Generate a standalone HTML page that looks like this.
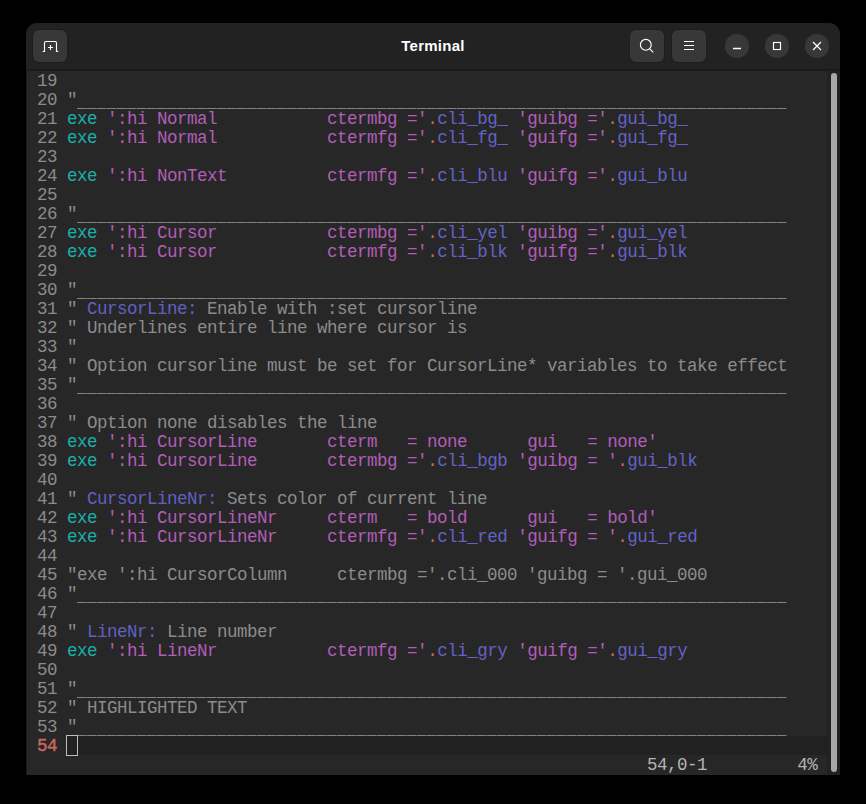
<!DOCTYPE html>
<html><head><meta charset="utf-8"><style>
html,body{margin:0;padding:0;background:#000;}
body{width:866px;height:804px;overflow:hidden;position:relative;}
.win{position:absolute;left:26px;top:23px;width:814px;height:752px;background:#222222;border-radius:11px 11px 0 0;overflow:hidden;}
.hdrline{position:absolute;left:0;top:46px;width:814px;height:2px;background:linear-gradient(#191919 0 1px,#1c1c1c 1px 2px);}
.content{position:absolute;left:1px;top:48px;width:800px;height:704px;background:#272727;}
.lborder{position:absolute;left:0;top:48px;width:1px;height:705px;background:#1c1c1c;}
.trough{position:absolute;left:801px;top:48px;width:13px;height:704px;background:#222222;}
.thumb{position:absolute;left:805px;top:50px;width:6px;height:699px;background:#a8a8a8;border-radius:3px;}
.l{position:absolute;left:1px;height:19px;line-height:19px;white-space:pre;font-family:"Liberation Mono",monospace;font-size:17.5px;letter-spacing:-0.5px;color:#cccccc;}
.ln{color:#8b8b8b;}
.lnr{color:#c96660;-webkit-text-stroke:0.45px #c96660;}
.k{color:#19b0ac;}
.s{color:#b25db8;}
.o{color:#c8665a;}
.v{color:#6262c6;}
.c{color:#8b8b8b;}
.t{color:#6060c2;}
.u{color:#8b8b8b;}
.uline{position:absolute;left:51px;width:710px;height:1px;background:repeating-linear-gradient(to right,#828282 0 9px,#5a5a5a 9px 10px);}
.curline{position:absolute;left:52px;top:713px;width:749px;height:19px;background:#212121;}
.cursor{position:absolute;left:40px;top:712px;width:10px;height:19px;border:1px solid #bdbdbd;background:#212121;}
.status{position:absolute;left:1px;top:733px;height:19px;line-height:19px;white-space:pre;font-family:"Liberation Mono",monospace;font-size:17.5px;letter-spacing:-0.5px;color:#b4b4b4;}
.btn{position:absolute;top:7px;width:34px;height:32px;border-radius:6px;background:#383838;box-shadow:0 0 0 1px rgba(0,0,0,0.12);}
.circ{position:absolute;top:11.3px;width:23.4px;height:23.4px;border-radius:50%;margin-left:0.3px;background:#383838;}
.title{position:absolute;left:0;width:814px;top:13px;text-align:center;font-family:"Liberation Sans",sans-serif;font-weight:bold;font-size:15px;letter-spacing:0.25px;color:#ffffff;line-height:20px;}
svg{position:absolute;left:0;top:0;}
</style></head>
<body><div class="win">

<div class="btn" style="left:7px"></div>
<div class="btn" style="left:604px"></div>
<div class="btn" style="left:646px"></div>
<div class="circ" style="left:699px"></div>
<div class="circ" style="left:739px"></div>
<div class="circ" style="left:779px"></div>
<div class="title">Terminal</div>
<svg width="814" height="46" viewBox="0 0 814 46" fill="none" stroke="#ffffff" stroke-width="1.15">
 <path d="M16.6 28.5 H18.5 V19.9 Q18.5 18.5 19.9 18.5 H29.1 Q30.5 18.5 30.5 19.9 V28.5 H32.3" />
 <path d="M24.5 22 V27 M22 24.5 H27" />
 <circle cx="619.8" cy="21.8" r="5.4" />
 <path d="M623.8 25.8 L627.3 29.3" />
 <path d="M658 18.5 H668 M658 22.5 H668 M658 26.5 H668" />
 <path d="M707 25.5 H715" stroke-width="1.3"/>
 <rect x="747.5" y="19.5" width="7" height="7" />
 <path d="M787 19 L795 27 M795 19 L787 27" />
</svg>

<div class="hdrline"></div>
<div class="content"></div>
<div class="lborder"></div>
<div class="trough"></div>
<div class="thumb"></div>
<div class="curline"></div>
<div class="uline" style="top:85px"></div><div class="uline" style="top:199px"></div><div class="uline" style="top:275px"></div><div class="uline" style="top:370px"></div><div class="uline" style="top:579px"></div><div class="uline" style="top:674px"></div><div class="uline" style="top:712px"></div>
<div class="l" style="top:49px"><span class="ln"> 19 </span></div>
<div class="l" style="top:68px"><span class="ln"> 20 </span><span class="c">&quot;</span><span class="u">                                                                       </span></div>
<div class="l" style="top:87px"><span class="ln"> 21 </span><span class="k">exe</span> <span class="s">&#x27;:hi Normal           </span><span class="s">ctermbg =&#x27;</span><span class="o">.</span><span class="v">cli_bg_</span> <span class="s">&#x27;guibg =&#x27;</span><span class="o">.</span><span class="v">gui_bg_</span></div>
<div class="l" style="top:106px"><span class="ln"> 22 </span><span class="k">exe</span> <span class="s">&#x27;:hi Normal           </span><span class="s">ctermfg =&#x27;</span><span class="o">.</span><span class="v">cli_fg_</span> <span class="s">&#x27;guifg =&#x27;</span><span class="o">.</span><span class="v">gui_fg_</span></div>
<div class="l" style="top:125px"><span class="ln"> 23 </span></div>
<div class="l" style="top:144px"><span class="ln"> 24 </span><span class="k">exe</span> <span class="s">&#x27;:hi NonText          </span><span class="s">ctermfg =&#x27;</span><span class="o">.</span><span class="v">cli_blu</span> <span class="s">&#x27;guifg =&#x27;</span><span class="o">.</span><span class="v">gui_blu</span></div>
<div class="l" style="top:163px"><span class="ln"> 25 </span></div>
<div class="l" style="top:182px"><span class="ln"> 26 </span><span class="c">&quot;</span><span class="u">                                                                       </span></div>
<div class="l" style="top:201px"><span class="ln"> 27 </span><span class="k">exe</span> <span class="s">&#x27;:hi Cursor           </span><span class="s">ctermbg =&#x27;</span><span class="o">.</span><span class="v">cli_yel</span> <span class="s">&#x27;guibg =&#x27;</span><span class="o">.</span><span class="v">gui_yel</span></div>
<div class="l" style="top:220px"><span class="ln"> 28 </span><span class="k">exe</span> <span class="s">&#x27;:hi Cursor           </span><span class="s">ctermfg =&#x27;</span><span class="o">.</span><span class="v">cli_blk</span> <span class="s">&#x27;guifg =&#x27;</span><span class="o">.</span><span class="v">gui_blk</span></div>
<div class="l" style="top:239px"><span class="ln"> 29 </span></div>
<div class="l" style="top:258px"><span class="ln"> 30 </span><span class="c">&quot;</span><span class="u">                                                                       </span></div>
<div class="l" style="top:277px"><span class="ln"> 31 </span><span class="c">&quot; </span><span class="t">CursorLine:</span><span class="c"> Enable with :set cursorline</span></div>
<div class="l" style="top:296px"><span class="ln"> 32 </span><span class="c">&quot; Underlines entire line where cursor is</span></div>
<div class="l" style="top:315px"><span class="ln"> 33 </span><span class="c">&quot;</span></div>
<div class="l" style="top:334px"><span class="ln"> 34 </span><span class="c">&quot; Option cursorline must be set for CursorLine* variables to take effect</span></div>
<div class="l" style="top:353px"><span class="ln"> 35 </span><span class="c">&quot;</span><span class="u">                                                                       </span></div>
<div class="l" style="top:372px"><span class="ln"> 36 </span></div>
<div class="l" style="top:391px"><span class="ln"> 37 </span><span class="c">&quot; Option none disables the line</span></div>
<div class="l" style="top:410px"><span class="ln"> 38 </span><span class="k">exe</span> <span class="s">&#x27;:hi CursorLine       </span><span class="s">cterm   = none      gui   = none&#x27;</span></div>
<div class="l" style="top:429px"><span class="ln"> 39 </span><span class="k">exe</span> <span class="s">&#x27;:hi CursorLine       </span><span class="s">ctermbg =&#x27;</span><span class="o">.</span><span class="v">cli_bgb</span> <span class="s">&#x27;guibg = &#x27;</span><span class="o">.</span><span class="v">gui_blk</span></div>
<div class="l" style="top:448px"><span class="ln"> 40 </span></div>
<div class="l" style="top:467px"><span class="ln"> 41 </span><span class="c">&quot; </span><span class="t">CursorLineNr:</span><span class="c"> Sets color of current line</span></div>
<div class="l" style="top:486px"><span class="ln"> 42 </span><span class="k">exe</span> <span class="s">&#x27;:hi CursorLineNr     </span><span class="s">cterm   = bold      gui   = bold&#x27;</span></div>
<div class="l" style="top:505px"><span class="ln"> 43 </span><span class="k">exe</span> <span class="s">&#x27;:hi CursorLineNr     </span><span class="s">ctermfg =&#x27;</span><span class="o">.</span><span class="v">cli_red</span> <span class="s">&#x27;guifg = &#x27;</span><span class="o">.</span><span class="v">gui_red</span></div>
<div class="l" style="top:524px"><span class="ln"> 44 </span></div>
<div class="l" style="top:543px"><span class="ln"> 45 </span><span class="c">&quot;exe &#x27;:hi CursorColumn     ctermbg =&#x27;.cli_000 &#x27;guibg = &#x27;.gui_000</span></div>
<div class="l" style="top:562px"><span class="ln"> 46 </span><span class="c">&quot;</span><span class="u">                                                                       </span></div>
<div class="l" style="top:581px"><span class="ln"> 47 </span></div>
<div class="l" style="top:600px"><span class="ln"> 48 </span><span class="c">&quot; </span><span class="t">LineNr:</span><span class="c"> Line number</span></div>
<div class="l" style="top:619px"><span class="ln"> 49 </span><span class="k">exe</span> <span class="s">&#x27;:hi LineNr           </span><span class="s">ctermfg =&#x27;</span><span class="o">.</span><span class="v">cli_gry</span> <span class="s">&#x27;guifg =&#x27;</span><span class="o">.</span><span class="v">gui_gry</span></div>
<div class="l" style="top:638px"><span class="ln"> 50 </span></div>
<div class="l" style="top:657px"><span class="ln"> 51 </span><span class="c">&quot;</span><span class="u">                                                                       </span></div>
<div class="l" style="top:676px"><span class="ln"> 52 </span><span class="c">&quot; HIGHLIGHTED TEXT</span></div>
<div class="l" style="top:695px"><span class="ln"> 53 </span><span class="c">&quot;</span><span class="u">                                                                       </span></div>
<div class="l" style="top:714px"><span class="lnr"> 54 </span></div>
<div class="cursor"></div>
<div class="status"><span>                                                              54,0-1         4%</span></div>
</div></body></html>
